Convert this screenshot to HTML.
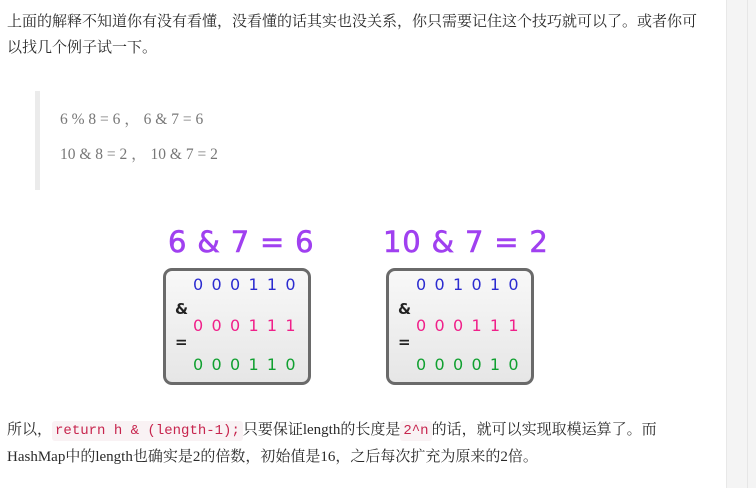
<!DOCTYPE html>
<html><head><meta charset="utf-8"><style>
body{margin:0;width:756px;height:488px;background:#fff;position:relative;overflow:hidden;font-family:"Liberation Serif","Noto Serif CJK SC",serif;color:#333;}
.side{position:absolute;left:726px;top:0;width:30px;height:488px;background:#f4f4f4;border-left:1px solid #e8e8e8;}
.side:after{content:"";position:absolute;left:20px;top:0;width:1px;height:488px;background:#e6e6e6;}
p{position:absolute;left:7px;margin:0;font-size:15px;line-height:26px;width:700px;color:#2a2a2a;}
.bq{position:absolute;left:35px;top:91px;width:5px;height:99px;background:#ebebeb;}
.q{position:absolute;left:60px;font-size:15.5px;color:#777;}
code{font-family:"Liberation Mono",monospace;font-size:14px;color:#c7254e;background:#f9f2f4;padding:2px 3px;border-radius:3px;}
.t{position:absolute;font-family:"DejaVu Sans",sans-serif;color:#a040f0;font-size:29px;top:225px;letter-spacing:0.8px;-webkit-text-stroke:0.6px #a040f0;}
.box{position:absolute;top:268px;width:142px;height:111px;border:3px solid #6a6a6a;border-radius:9px;background:linear-gradient(#f8f8f8,#e6e6e6);}
.r{position:absolute;font-family:"DejaVu Sans",sans-serif;font-size:16px;letter-spacing:8.3px;}
.s{position:absolute;font-family:"DejaVu Sans",sans-serif;font-size:15px;font-weight:bold;color:#222;}
</style></head><body>
<div class="side"></div>
<p style="top:9px">上面的解释不知道你有没有看懂，没看懂的话其实也没关系，你只需要记住这个技巧就可以了。或者你可以找几个例子试一下。</p>
<div class="bq"></div>
<div class="q" style="top:107px">6 % 8 = 6 ，&nbsp;6 &amp; 7 = 6</div>
<div class="q" style="top:142px">10 &amp; 8 = 2 ，&nbsp;10 &amp; 7 = 2</div>
<div class="t" style="left:168px">6 &amp; 7 = 6</div>
<div class="t" style="left:383px">10 &amp; 7 = 2</div>
<div class="box" style="left:163px">
<div class="r" style="left:27px;top:4px;color:#2b2bd0">000110</div>
<div class="s" style="left:9px;top:29px">&amp;</div>
<div class="r" style="left:27px;top:45px;color:#f0208a">000111</div>
<div class="s" style="left:9px;top:62px">=</div>
<div class="r" style="left:27px;top:84px;color:#10a030">000110</div>
</div>
<div class="box" style="left:386px">
<div class="r" style="left:27px;top:4px;color:#2b2bd0">001010</div>
<div class="s" style="left:9px;top:29px">&amp;</div>
<div class="r" style="left:27px;top:45px;color:#f0208a">000111</div>
<div class="s" style="left:9px;top:62px">=</div>
<div class="r" style="left:27px;top:84px;color:#10a030">000010</div>
</div>
<p style="top:417px">所以，<code>return h &amp; (length-1);</code>只要保证length的长度是<code>2^n</code>的话，就可以实现取模运算了。而HashMap中的length也确实是2的倍数，初始值是16，之后每次扩充为原来的2倍。</p>
</body></html>
